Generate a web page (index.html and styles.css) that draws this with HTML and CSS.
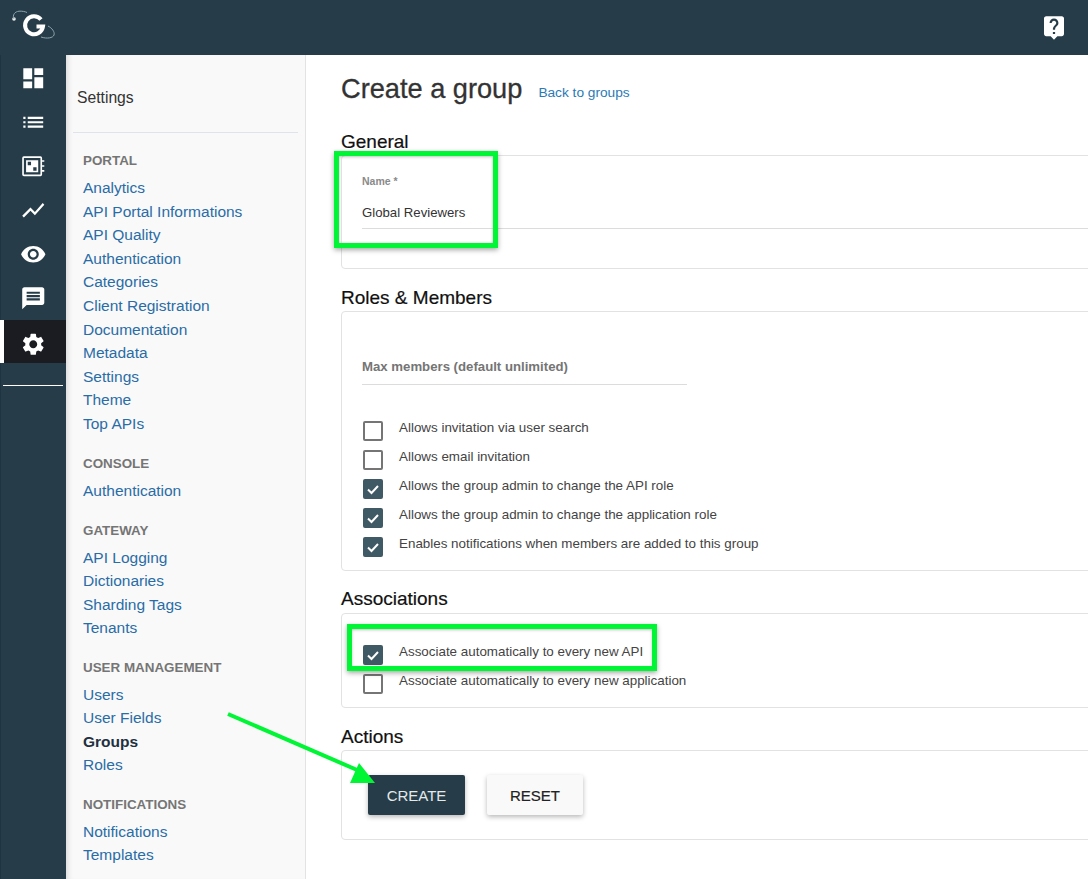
FILE: index.html
```html
<!DOCTYPE html>
<html lang="en">

<head>
    <meta charset="UTF-8">
    <title>Create a group</title>
    <link rel="stylesheet" href="styles.css">
</head>

<body>

<header class="topbar">
    <svg class="logo" viewBox="0 0 56 55" width="56" height="55">
        <circle cx="14" cy="19" r="1.800" fill="#e8ecee"/>
        <path d="M14 19C12 15 15 11.500 19 11.200C22 11 25 11.500 27 12.500" fill="none" stroke="#8fa3ab" stroke-width="1"/>
        <path d="M41 19.500A9 9 0 1 0 43 26.500H36.500" fill="none" stroke="#fff" stroke-width="4"/>
        <path d="M48 26C52 28 55 32 54 35C53 38 47 39 41 37" fill="none" stroke="#8fa3ab" stroke-width="1"/>
    </svg>
    <svg class="help-icon" viewBox="3 2 18 21" width="20" height="24"><path d="M19 2H5c-1.110 0-2 .9-2 2v14c0 1.100.89 2 2 2h4l3 3 3-3h4c1.100 0 2-.9 2-2V4c0-1.100-.9-2-2-2zm-6 16h-2v-2h2v2zm2.070-7.750l-.9.92C13.450 11.900 13 12.500 13 14h-2v-.5c0-1.100.45-2.100 1.170-2.830l1.240-1.260c.37-.36.59-.86.59-1.410 0-1.100-.9-2-2-2s-2 .9-2 2H8c0-2.210 1.790-4 4-4s4 1.790 4 4c0 .88-.36 1.680-.93 2.250z"/></svg>
</header>

<div class="layout">
    <nav class="rail">
        <a class="rail-item"><svg viewBox="0 0 24 24"><path d="M3 13h8V3H3v10zm0 8h8v-6H3v6zm10 0h8V11h-8v10zm0-18v6h8V3h-8z"/></svg></a>
        <a class="rail-item"><svg viewBox="0 0 24 24"><path d="M3 13h2v-2H3v2zm0 4h2v-2H3v2zm0-8h2V7H3v2zm4 4h14v-2H7v2zm0 4h14v-2H7v2zM7 7v2h14V7H7z"/></svg></a>
        <a class="rail-item"><svg viewBox="0 0 24 24"><path fill-rule="evenodd" d="M3.500 3h15a1.500 1.500 0 0 1 1.500 1.500v15a1.500 1.500 0 0 1-1.500 1.500h-15A1.500 1.500 0 0 1 2 19.500v-15A1.500 1.500 0 0 1 3.500 3zM3.500 4.500v15h15v-15zM5.500 6.500h11v11h-11zM7 8v3h3V8zM12 13v3h3v-3zM20 6.500h2V8h-2zM20 11h2v1.500h-2zM20 15.500h2V17h-2z"/></svg></a>
        <a class="rail-item"><svg viewBox="0 0 24 24"><path d="M3.500 18.490l6-6.010 4 4L22 6.920l-1.410-1.410-7.090 7.970-4-4L2 16.990z"/></svg></a>
        <a class="rail-item"><svg viewBox="0 0 24 24"><path d="M12 4.500C7 4.500 2.730 7.610 1 12c1.730 4.390 6 7.500 11 7.500s9.270-3.110 11-7.500c-1.730-4.390-6-7.500-11-7.500zM12 17c-2.760 0-5-2.240-5-5s2.240-5 5-5 5 2.240 5 5-2.240 5-5 5zm0-8c-1.660 0-3 1.340-3 3s1.340 3 3 3 3-1.340 3-3-1.340-3-3-3z"/></svg></a>
        <a class="rail-item"><svg viewBox="0 0 24 24"><path d="M20 2H4c-1.100 0-1.990.9-1.990 2L2 22l4-4h14c1.100 0 2-.9 2-2V4c0-1.100-.9-2-2-2zm-2 12H6v-2h12v2zm0-3H6V9h12v2zm0-3H6V6h12v2z"/></svg></a>
        <a class="rail-item active"><svg viewBox="0 0 24 24"><path d="M19.140 12.940c.04-.3.06-.61.06-.94 0-.32-.02-.64-.07-.94l2.030-1.580c.18-.14.23-.41.12-.61l-1.920-3.320c-.12-.22-.37-.29-.59-.22l-2.390.96c-.5-.38-1.030-.7-1.620-.94l-.36-2.540c-.04-.24-.24-.41-.48-.41h-3.840c-.24 0-.43.17-.47.41l-.36 2.540c-.59.24-1.130.57-1.620.94l-2.390-.96c-.22-.08-.47 0-.59.22L2.740 8.870c-.12.21-.08.47.12.61l2.030 1.580c-.05.3-.09.63-.09.94s.02.64.07.94l-2.030 1.580c-.18.14-.23.41-.12.61l1.920 3.320c.12.22.37.29.59.22l2.390-.96c.5.38 1.030.7 1.620.94l.36 2.540c.05.24.24.41.48.41h3.840c.24 0 .44-.17.47-.41l.36-2.540c.59-.24 1.130-.56 1.620-.94l2.390.96c.22.08.47 0 .59-.22l1.920-3.320c.12-.22.07-.47-.12-.61l-2.010-1.580zM12 15.600c-1.980 0-3.600-1.620-3.600-3.600s1.620-3.600 3.600-3.600 3.600 1.620 3.600 3.600-1.620 3.600-3.600 3.600z"/></svg></a>
        <hr class="rail-line">
    </nav>

    <aside class="sidebar">
        <div class="sidebar-title">Settings</div>

        <div class="side-group">
            <h4>PORTAL</h4>
            <a>Analytics</a>
            <a>API Portal Informations</a>
            <a>API Quality</a>
            <a>Authentication</a>
            <a>Categories</a>
            <a>Client Registration</a>
            <a>Documentation</a>
            <a>Metadata</a>
            <a>Settings</a>
            <a>Theme</a>
            <a>Top APIs</a>
        </div>
        <div class="side-group">
            <h4>CONSOLE</h4>
            <a>Authentication</a>
        </div>
        <div class="side-group">
            <h4>GATEWAY</h4>
            <a>API Logging</a>
            <a>Dictionaries</a>
            <a>Sharding Tags</a>
            <a>Tenants</a>
        </div>
        <div class="side-group">
            <h4>USER MANAGEMENT</h4>
            <a>Users</a>
            <a>User Fields</a>
            <a class="current">Groups</a>
            <a>Roles</a>
        </div>
        <div class="side-group">
            <h4>NOTIFICATIONS</h4>
            <a>Notifications</a>
            <a>Templates</a>
        </div>
    </aside>

    <main class="content">
        <div class="page-head">
            <h1>Create a group</h1>
            <a class="back-link">Back to groups</a>
        </div>

        <h2>General</h2>
        <section class="card card-general">
            <label class="small-label">Name *</label>
            <div class="input-value">Global Reviewers</div>
        </section>

        <h2>Roles &amp; Members</h2>
        <section class="card card-roles">
            <div class="max-members">Max members (default unlimited)</div>
            <div class="checks">
                <div class="check-row"><span class="box"></span>Allows invitation via user search</div>
                <div class="check-row"><span class="box"></span>Allows email invitation</div>
                <div class="check-row"><span class="box on"><svg viewBox="0 0 20 20"><path d="M5 10.500l3.500 3.500L15 7" /></svg></span>Allows the group admin to change the API role</div>
                <div class="check-row"><span class="box on"><svg viewBox="0 0 20 20"><path d="M5 10.500l3.500 3.500L15 7" /></svg></span>Allows the group admin to change the application role</div>
                <div class="check-row"><span class="box on"><svg viewBox="0 0 20 20"><path d="M5 10.500l3.500 3.500L15 7" /></svg></span>Enables notifications when members are added to this group</div>
            </div>
        </section>

        <h2>Associations</h2>
        <section class="card card-assoc">
            <div class="checks">
                <div class="check-row"><span class="box on"><svg viewBox="0 0 20 20"><path d="M5 10.500l3.500 3.500L15 7" /></svg></span>Associate automatically to every new API</div>
                <div class="check-row"><span class="box"></span>Associate automatically to every new application</div>
            </div>
        </section>

        <h2>Actions</h2>
        <section class="card card-actions">
            <button class="btn btn-primary">CREATE</button>
            <button class="btn">RESET</button>
        </section>
    </main>
</div>

<!-- annotations drawn on top of the screenshot -->
<div class="mark mark-name"></div>
<div class="mark mark-assoc"></div>
<svg class="arrow" viewBox="0 0 1088 879" width="1088" height="879">
    <path d="M228 714L364 773" stroke="#00f534" stroke-width="4" fill="none"/>
    <path d="M359 763L350 783L375 783z" fill="#00f534"/>
</svg>

</body>

</html>
```

FILE: styles.css
```css
* {
    box-sizing: border-box;
}

html,
body {
    height: 100%;
    overflow: hidden;
}

body {
    margin: 0;
    font-family: "Liberation Sans", Arial, sans-serif;
    background-color: #fff;
    color: #333;
}

.topbar {
    display: flex;
    align-items: center;
    justify-content: space-between;
    height: 55px;
    padding: 0 24px 0 0;
    background-color: #263d49;
}

.logo {
    display: block;
}

.help-icon {
    fill: #fff;
}

.layout {
    display: flex;
    height: 824px;
}

/* left icon rail */
.rail {
    width: 66px;
    flex: none;
    padding-top: 1px;
    background-color: #263d49;
    box-shadow: inset 1px 0 0 #1f3440;
}

.rail-item {
    display: flex;
    align-items: center;
    justify-content: center;
    height: 44px;
}

.rail-item svg {
    width: 26.5px;
    height: 26.5px;
    fill: #fff;
}

.rail-item.active {
    height: 43px;
    margin-bottom: 1px;
    padding-top: 5px;
    background-color: #1a1c22;
    box-shadow: inset 4px 0 0 #fff;
}

.rail-line {
    margin: 22px 3px 0 3px;
    border: 0;
    border-top: 1px solid #fff;
}

/* settings menu */
.sidebar {
    width: 240px;
    flex: none;
    padding: 0 7px 0 7px;
    background-color: #f9f9f9;
    border-right: 1px solid #e3e3e3;
    box-shadow: inset 6px 0 6px -5px rgba(0, 0, 0, 0.16);
}

.sidebar-title {
    height: 78px;
    padding: 34px 0 0 4px;
    font-size: 15.700px;
    line-height: 18px;
    border-bottom: 1px solid #dfe3ea;
    color: #333;
}

.side-group {
    padding: 0 0 0 10px;
    margin-bottom: 16.700px;
}

.side-group:nth-child(2) {
    margin-top: 17px;
    margin-bottom: 17.700px;
}

.side-group h4 {
    margin: 0 0 5px;
    font-size: 13.400px;
    line-height: 21px;
    font-weight: bold;
    color: #757575;
}

.side-group a {
    display: block;
    font-size: 15.500px;
    line-height: 23.600px;
    color: #2a6ca6;
}

.side-group a.current {
    font-weight: bold;
    color: #1f3040;
}

/* main column */
.content {
    flex: 1;
    min-width: 0;
    padding: 0 0 0 35px;
}

.page-head {
    display: flex;
    align-items: flex-start;
    height: 75px;
    padding-top: 16px;
}

h1 {
    margin: 0;
    font-size: 27.200px;
    line-height: 36px;
    font-weight: normal;
    color: #333;
    -webkit-text-stroke: 0.3px #333;
}

.back-link {
    margin: 14px 0 0 16px;
    font-size: 13.700px;
    line-height: 16px;
    color: #2a7ab5;
}

h2 {
    margin: 0 0 1px;
    font-size: 19px;
    line-height: 24px;
    font-weight: normal;
    color: #111;
    -webkit-text-stroke: 0.2px #111;
}

.card {
    margin-right: -12px;
    border: 1px solid #e2e2e2;
    border-radius: 4px;
    background-color: #fff;
}

.card-general {
    height: 114px;
    margin-bottom: 17px;
    padding: 19px 0 0 20px;
}

.small-label {
    display: block;
    font-size: 10.500px;
    line-height: 12px;
    font-weight: bold;
    color: #8a8a8a;
}

.input-value {
    margin-top: 14px;
    padding-bottom: 4px;
    font-size: 13.200px;
    line-height: 23px;
    border-bottom: 1px solid #dcdcdc;
}

.card-roles {
    height: 260px;
    margin-bottom: 16px;
    padding: 43px 0 0 20px;
}

.max-members {
    width: 325px;
    height: 30px;
    font-size: 13.200px;
    line-height: 24px;
    font-weight: bold;
    color: #757575;
    border-bottom: 1px solid #dcdcdc;
}

.checks {
    margin-top: 36px;
}

.check-row {
    display: flex;
    align-items: flex-start;
    height: 29px;
    font-size: 13.400px;
    line-height: 13px;
    color: #444;
}

.box {
    flex: none;
    width: 20px;
    height: 20px;
    margin: 0 16px 0 1px;
    border: 2px solid #757575;
    border-radius: 2px;
    background-color: #fff;
}

.box.on {
    background-color: #3f5965;
    border: 0;
}

.box svg {
    display: block;
    width: 20px;
    height: 20px;
    fill: none;
    stroke: #fff;
    stroke-width: 2;
}

.card-assoc {
    height: 95px;
    margin-top: 2px;
    margin-bottom: 17px;
    padding: 0 0 0 20px;
}

.card-assoc .checks {
    margin-top: 31px;
}

.card-actions {
    display: flex;
    gap: 22px;
    height: 90px;
    padding: 24px 0 0 26px;
}

.btn {
    width: 96px;
    height: 40px;
    padding: 0;
    font-family: inherit;
    font-size: 15px;
    color: #222;
    background-color: #f9f9f9;
    border: 0;
    border-radius: 2px;
    box-shadow: 0 2px 5px rgba(0, 0, 0, 0.28);
    -webkit-text-stroke: 0.2px #222;
}

.btn-primary {
    width: 97px;
    color: #e4e9eb;
    background-color: #263d49;
    -webkit-text-stroke: 0;
}

.mark {
    position: absolute;
    border: 5px solid #00f534;
    box-shadow: 0 2px 5px rgba(0, 0, 0, 0.35), inset 0 1px 3px rgba(0, 0, 0, 0.25);
}

.mark-name {
    left: 334px;
    top: 151px;
    width: 164px;
    height: 97px;
}

.mark-assoc {
    left: 347px;
    top: 624px;
    width: 310px;
    height: 47px;
}

.arrow {
    position: absolute;
    left: 0;
    top: 0;
    pointer-events: none;
}
```
